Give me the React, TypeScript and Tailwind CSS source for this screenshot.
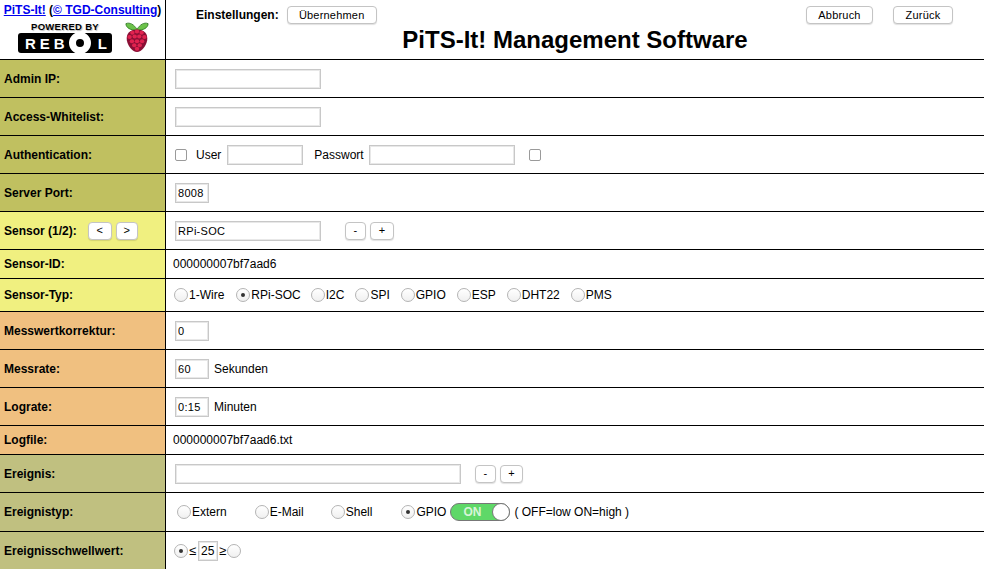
import type { ReactNode } from 'react'

function Btn({ children, className = '' }: { children: ReactNode; className?: string }) {
  return (
    <button className={`h-[18px] bg-white border border-[#c4c4c4] rounded-[4px] text-[11px] font-normal leading-none tracking-[0.2px] text-black shadow-[0_1px_1px_rgba(0,0,0,0.12)] ${className}`}>
      {children}
    </button>
  )
}

function Field({ value = '', className = 'w-[146px]' }: { value?: string; className?: string }) {
  return (
    <input
      readOnly
      value={value}
      className={`h-[20px] bg-white border border-[#c8c8c8] shadow-[inset_0_0_0_1px_#e8e8e8] px-[2px] text-[11px] text-black outline-none tracking-[0.3px] ${className}`}
    />
  )
}

function Radio({ checked = false }: { checked?: boolean }) {
  return (
    <span className="w-[14px] h-[14px] shrink-0 rounded-full border border-[#b4b4b4] bg-gradient-to-b from-white to-[#f0f0f0] flex items-center justify-center">
      {checked && <span className="w-[4px] h-[4px] rounded-full bg-[#333]" />}
    </span>
  )
}

function Opt({ label, checked, className = '' }: { label: string; checked?: boolean; className?: string }) {
  return (
    <span className={`flex items-center gap-px ${className}`}>
      <Radio checked={checked} />
      {label}
    </span>
  )
}

function Check({ className = '' }: { className?: string }) {
  return <span className={`w-[12px] h-[12px] shrink-0 rounded-[2px] border border-[#9a9a9a] bg-white ${className}`} />
}

function Row({ label, color, height = 'h-[38px]', extra, children }: {
  label: string
  color: string
  height?: string
  extra?: ReactNode
  children: ReactNode
}) {
  return (
    <div className={`flex border-b border-black ${height}`}>
      <div className={`w-[166px] shrink-0 border-r border-black pl-[4px] flex items-center font-bold ${color}`}>
        {label}
        {extra}
      </div>
      <div className="flex-1 flex items-center">{children}</div>
    </div>
  )
}

function Raspberry() {
  const dots = [[12, 13], [17, 11.5], [22, 13], [9, 18], [14.5, 17.5], [19.5, 17.5], [25, 18], [11.5, 23], [17, 23], [22.5, 23], [14, 28], [20, 28], [17, 32]]
  return (
    <svg width="24" height="30" viewBox="4 0 26 36" preserveAspectRatio="none" className="ml-[13px]">
      <path d="M17 9C14 3 9 0 5 2c0 5 5 8 12 8 7 0 12-3 12-8-4-2-9 1-12 7z" fill="#6cc24a" stroke="#2f7a22" strokeWidth="1" />
      <path d="M17 9c8 0 12 5 11 13-1 7-6 14-11 14S7 29 6 22C5 14 9 9 17 9z" fill="#8a0f35" />
      {dots.map(([x, y]) => (
        <circle key={`${x}-${y}`} cx={x} cy={y} r="2.4" fill="#e0224f" />
      ))}
    </svg>
  )
}

function RebolLogo() {
  return (
    <div className="flex flex-col items-center w-[94px]">
      <span className="text-[9.5px] leading-[10px] font-black tracking-[0.3px] text-black [text-shadow:1px_1px_1px_#bbb]">POWERED BY</span>
      <div className="mt-[1px] w-[94px] h-[20px] bg-black rounded-[3px] flex items-center pl-[7px] text-white font-bold text-[15px] leading-none overflow-hidden">
        <span>R</span>
        <span className="ml-[4px]">E</span>
        <span className="ml-[4px]">B</span>
        <span aria-label="O" className="ml-[4px] w-[22px] h-[22px] shrink-0 rounded-full border-[7px] border-white" />
        <span className="ml-[7px]">L</span>
      </div>
    </div>
  )
}

const olive = 'bg-[#c0c060]'
const yellow = 'bg-[#f0f080]'
const orange = 'bg-[#f0c080]'
const khaki = 'bg-[#c0c080]'

export default function App() {
  return (
    <div className="w-[984px] h-[569px] overflow-hidden bg-white text-black text-[12px] font-['Liberation_Sans',Arial,sans-serif]">
      {/* header */}
      <div className="flex h-[60px] border-b border-black">
        <div className="w-[166px] shrink-0 border-r border-black flex flex-col items-center pt-[3px]">
          <div className="font-bold leading-[14px] text-[12px] text-[#0000ee] whitespace-nowrap">
            <span className="underline">PiTS-It!</span> <span className="text-black">(</span>
            <span className="underline">© TGD-Consulting</span>
            <span className="text-black">)</span>
          </div>
          <div className="flex items-start mt-[5px] self-start pl-[18px]">
            <RebolLogo />
            <Raspberry />
          </div>
        </div>
        <div className="flex-1 flex flex-col">
          <div className="flex items-center pt-[6px] pl-[30px] pr-[31px]">
            <span className="font-bold">Einstellungen:</span>
            <Btn className="w-[90px] ml-[8px]">Übernehmen</Btn>
            <Btn className="w-[67px] ml-auto">Abbruch</Btn>
            <Btn className="w-[60px] ml-[20px]">Zurück</Btn>
          </div>
          <h1 className="text-center font-bold text-[24px] leading-[28px] mt-[2px]">PiTS-It! Management Software</h1>
        </div>
      </div>

      <Row label="Admin IP:" color={olive}>
        <div className="pl-[9px]"><Field /></div>
      </Row>
      <Row label="Access-Whitelist:" color={olive}>
        <div className="pl-[9px]"><Field /></div>
      </Row>
      <Row label="Authentication:" color={olive}>
        <div className="pl-[9px] flex items-center">
          <Check />
          <span className="ml-[9px]">User</span>
          <Field className="w-[76px] ml-[6px]" />
          <span className="ml-[11px]">Passwort</span>
          <Field className="w-[146px] ml-[5px]" />
          <Check className="ml-[14px]" />
        </div>
      </Row>
      <Row label="Server Port:" color={olive}>
        <div className="pl-[9px]"><Field value="8008" className="w-[34px]" /></div>
      </Row>
      <Row
        label="Sensor (1/2):"
        color={yellow}
        extra={
          <span className="flex gap-[4px] ml-[11px]">
            <Btn className="w-[24px]">&lt;</Btn>
            <Btn className="w-[22px]">&gt;</Btn>
          </span>
        }
      >
        <div className="pl-[9px] flex items-center">
          <Field value="RPi-SOC" />
          <Btn className="w-[21px] ml-[24px]">-</Btn>
          <Btn className="w-[24px] ml-[4px]">+</Btn>
        </div>
      </Row>
      <Row label="Sensor-ID:" color={yellow} height="h-[29px]">
        <span className="pl-[7px]">000000007bf7aad6</span>
      </Row>
      <Row label="Sensor-Typ:" color={yellow} height="h-[33px]">
        <div className="pl-[8px] flex items-center gap-[11px]">
          <Opt label="1-Wire" className="mr-px" />
          <Opt label="RPi-SOC" checked className="-mr-px" />
          <Opt label="I2C" />
          <Opt label="SPI" />
          <Opt label="GPIO" />
          <Opt label="ESP" />
          <Opt label="DHT22" />
          <Opt label="PMS" />
        </div>
      </Row>
      <Row label="Messwertkorrektur:" color={orange}>
        <div className="pl-[9px]"><Field value="0" className="w-[34px]" /></div>
      </Row>
      <Row label="Messrate:" color={orange}>
        <div className="pl-[9px] flex items-center gap-[5px]">
          <Field value="60" className="w-[34px]" />
          Sekunden
        </div>
      </Row>
      <Row label="Lograte:" color={orange}>
        <div className="pl-[9px] flex items-center gap-[5px]">
          <Field value="0:15" className="w-[34px]" />
          Minuten
        </div>
      </Row>
      <Row label="Logfile:" color={orange} height="h-[29px]">
        <span className="pl-[7px]">000000007bf7aad6.txt</span>
      </Row>
      <Row label="Ereignis:" color={khaki}>
        <div className="pl-[9px] flex items-center">
          <Field className="w-[286px]" />
          <Btn className="w-[21px] ml-[14px]">-</Btn>
          <Btn className="w-[23px] ml-[4px]">+</Btn>
        </div>
      </Row>
      <Row label="Ereignistyp:" color={khaki} height="h-[39px]">
        <div className="pl-[11px] flex items-center gap-[28px]">
          <Opt label="Extern" />
          <Opt label="E-Mail" className="-mr-px" />
          <Opt label="Shell" className="mr-px" />
          <div className="flex items-center">
            <Opt label="GPIO" checked />
            <span className="relative ml-[4px] w-[60px] h-[18px] rounded-full border border-[#777] bg-[#5fd868] text-[#d8f5d8] font-bold flex items-center pl-[12px]">
              ON
              <span className="absolute right-[-1px] top-[-1px] w-[18px] h-[18px] rounded-full bg-white border border-[#777]" />
            </span>
            <span className="ml-[4px]">( OFF=low ON=high )</span>
          </div>
        </div>
      </Row>
      <Row label="Ereignisschwellwert:" color={khaki}>
        <div className="pl-[8px] flex items-center">
          <Radio checked />
          <span className="ml-px w-[9px] text-[13px]">≤</span>
          <Field value="25" className="w-[20px] !px-[2px] !text-[12px] !tracking-normal" />
          <span className="ml-px w-[8px] text-[13px]">≥</span>
          <Radio />
        </div>
      </Row>
    </div>
  )
}
